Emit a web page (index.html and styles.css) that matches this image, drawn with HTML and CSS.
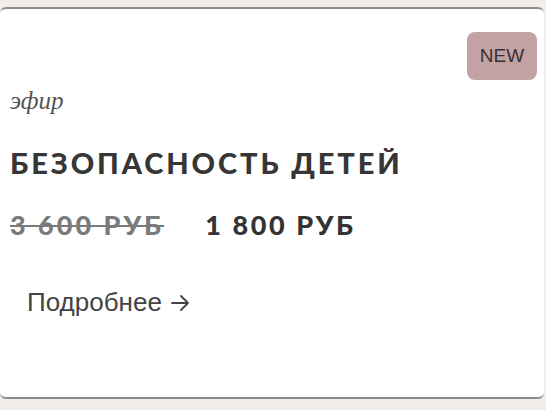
FILE: index.html
```html
<!DOCTYPE html>
<html lang="ru">
<head>
<meta charset="utf-8">
<link rel="stylesheet" href="styles.css">
</head>
<body>
<div class="page">
  <div class="card">
    <div class="badge-row"><span class="badge">NEW</span></div>
    <div class="kind">эфир</div>
    <h2 class="title">БЕЗОПАСНОСТЬ ДЕТЕЙ</h2>
    <div class="prices">
      <span class="old">3 600 РУБ</span>
      <span class="new">1 800 РУБ</span>
    </div>
    <a class="more" href="#">Подробнее<svg class="arrow" width="20" height="18" viewBox="0 0 20 18"><path d="M2 9H18M11 2L18 9L11 16" fill="none" stroke="#444" stroke-width="1.8" stroke-linecap="round" stroke-linejoin="round"/></svg></a>
  </div>
</div>
</body>
</html>
```
FILE: styles.css
```css
html, body { margin: 0; padding: 0; }
body { background: #f1eee9; width: 546px; height: 410px; overflow: hidden; }
.page { padding: 7px 2px 0 0; }
.card {
  background: #fff;
  border-top: 2px solid #8c8c8c;
  border-bottom: 2px solid #8c8c8c;
  border-radius: 6px;
  height: 392px;
  box-sizing: border-box;
  padding: 0 0 0 10px;
}
.badge-row { display: flex; justify-content: flex-end; padding: 23px 7px 0 0; height: 48px; }
.badge {
  background: #c4a1a5;
  color: #333;
  font-family: "Liberation Sans", Arial, sans-serif;
  font-size: 19px;
  border-radius: 8px;
  width: 70px; height: 48px;
  display: flex; align-items: center; justify-content: center;
}
.kind {
  font-family: "Liberation Serif", serif;
  font-style: italic;
  font-size: 25px;
  color: #555;
  margin-top: 6px;
  line-height: 30px;
}
.title {
  margin: 30px 0 0;
  font-family: Lato, sans-serif;
  font-weight: 900;
  font-size: 29px;
  letter-spacing: 2.9px;
  color: #363636;
  line-height: 34px;
}
.prices {
  margin-top: 30px;
  display: flex; gap: 41px;
  font-family: Lato, sans-serif;
  font-weight: 900;
  font-size: 27px;
  letter-spacing: 3px;
  line-height: 30px;
}
.old { color: #7a7a7a; text-decoration: line-through; text-decoration-thickness: 2px; }
.new { color: #333; letter-spacing: 2.6px; }
.more {
  display: inline-flex;
  align-items: center;
  gap: 8px;
  margin: 47px 0 0 17px;
  font-family: "Liberation Sans", Arial, sans-serif;
  font-size: 26px;
  color: #444;
  text-decoration: none;
  line-height: 30px;
}
.arrow { display: block; margin-top: 2px; }
```
